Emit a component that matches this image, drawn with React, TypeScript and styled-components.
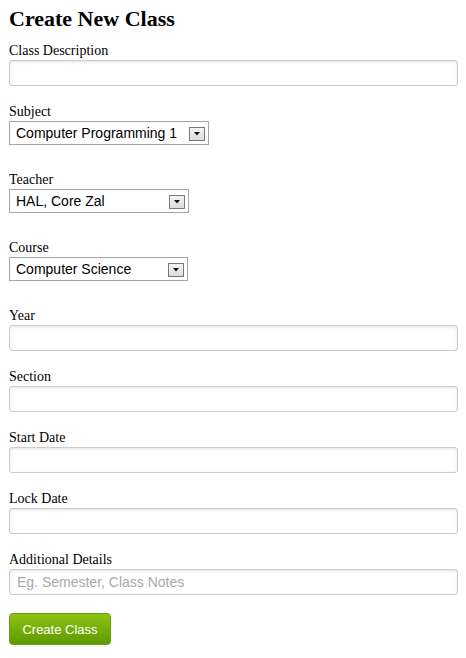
import React from "react";
import styled, { createGlobalStyle } from "styled-components";

const Global = createGlobalStyle`
  html, body { margin: 0; padding: 0; background: #ffffff; }
  body { font-family: "Liberation Serif", "Times New Roman", serif; color: #000; }
  * { box-sizing: border-box; }
`;

const Page = styled.div`
  padding: 5px 8px 8px 9px;
  width: 466px;
`;

const Title = styled.h2`
  margin: 0 0 10px 0;
  font-family: "Liberation Serif", "Times New Roman", serif;
  font-size: 22px;
  line-height: 28px;
  font-weight: bold;
`;

const Form = styled.form`
  display: flex;
  flex-direction: column;
  align-items: stretch;
`;

const Field = styled.div<{ $after: number }>`
  display: flex;
  flex-direction: column;
  align-items: flex-start;
  margin-bottom: ${(p) => p.$after}px;
`;

const Label = styled.label`
  display: block;
  font-family: "Liberation Serif", "Times New Roman", serif;
  font-size: 14px;
  line-height: 16px;
  margin: 0 0 1px 0;
`;

const TextInput = styled.input`
  display: block;
  width: 100%;
  height: 26px;
  margin: 0;
  padding: 0 6px 0 7px;
  border: 1px solid #cdcdcd;
  border-radius: 3px;
  box-shadow: inset 0 1px 3px rgba(0, 0, 0, 0.12);
  font-family: "Liberation Sans", Arial, sans-serif;
  font-size: 14px;
  color: #333;
  background: #fff;
  outline: none;
  &::placeholder { color: #a9a9a9; }
`;

const SelectWrap = styled.div<{ $w: number }>`
  position: relative;
  width: ${(p) => p.$w}px;
  height: 24px;
`;

const Select = styled.select`
  appearance: none;
  -webkit-appearance: none;
  width: 100%;
  height: 100%;
  margin: 0;
  padding: 0 22px 0 6px;
  border: 1px solid #a5a5a5;
  border-radius: 0;
  background: #fff;
  font-family: "Liberation Sans", Arial, sans-serif;
  font-size: 14px;
  color: #000;
  outline: none;
`;

const Arrow = styled.span`
  position: absolute;
  right: 4px;
  top: 6px;
  width: 16px;
  height: 14px;
  border: 1px solid #7a7a7a;
  background: linear-gradient(#f4f4f4, #dcdcdc);
  display: flex;
  align-items: center;
  justify-content: center;
  pointer-events: none;
`;

const Button = styled.button`
  width: 102px;
  height: 32px;
  margin: 0;
  padding: 0;
  border: 1px solid #6a9e0c;
  border-radius: 4px;
  background: linear-gradient(#8dc413, #5e9900);
  color: #fff;
  font-family: "Liberation Sans", Arial, sans-serif;
  font-size: 13px;
  cursor: pointer;
`;

function ArrowIcon() {
  return (
    <svg width="6" height="4" viewBox="0 0 6 4">
      <polygon points="0,0 6,0 3,3.5" fill="#111" />
    </svg>
  );
}

function SelectField({ label, value, width }: { label: string; value: string; width: number }) {
  return (
    <Field $after={27}>
      <Label>{label}</Label>
      <SelectWrap $w={width}>
        <Select defaultValue={value}>
          <option>{value}</option>
        </Select>
        <Arrow>
          <ArrowIcon />
        </Arrow>
      </SelectWrap>
    </Field>
  );
}

function InputField({ label, placeholder }: { label: string; placeholder?: string }) {
  return (
    <Field $after={18}>
      <Label>{label}</Label>
      <TextInput type="text" placeholder={placeholder} />
    </Field>
  );
}

export default function App() {
  return (
    <Page>
      <Global />
      <Title>Create New Class</Title>
      <Form onSubmit={(e) => e.preventDefault()}>
        <InputField label="Class Description" />
        <SelectField label="Subject" value="Computer Programming 1" width={200} />
        <SelectField label="Teacher" value="HAL, Core Zal" width={180} />
        <SelectField label="Course" value="Computer Science" width={179} />
        <InputField label="Year" />
        <InputField label="Section" />
        <InputField label="Start Date" />
        <InputField label="Lock Date" />
        <InputField label="Additional Details" placeholder="Eg. Semester, Class Notes" />
        <div>
          <Button type="submit">Create Class</Button>
        </div>
      </Form>
    </Page>
  );
}
